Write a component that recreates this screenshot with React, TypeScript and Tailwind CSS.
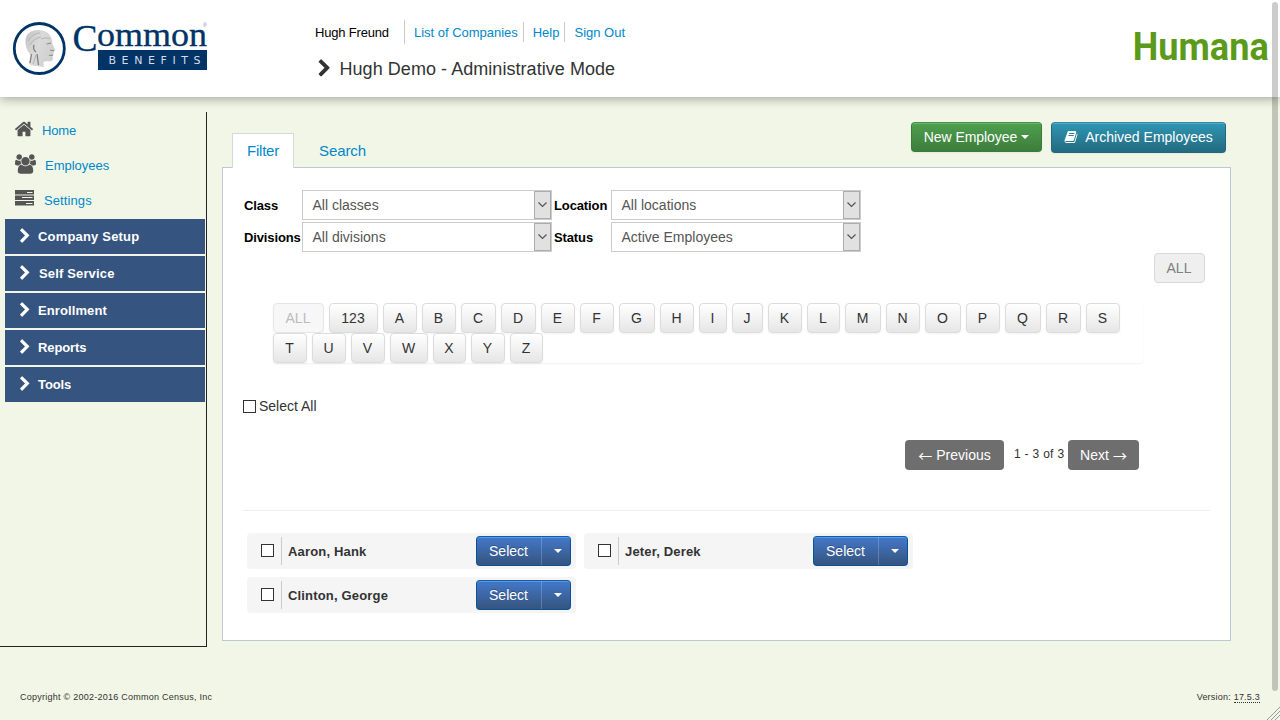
import type { ReactNode } from "react";

type IconProps = { d: string; box?: string; className: string };

function Glyph({ d, box = "0 0 1792 1792", className }: IconProps) {
  return (
    <svg viewBox={box} className={className} fill="currentColor" aria-hidden="true">
      <path d={d} />
    </svg>
  );
}

const CHEVRON =
  "M1363 877l-742 742q-19 19-45 19t-45-19l-166-166q-19-19-19-45t19-45l531-531-531-531q-19-19-19-45t19-45l166-166q19-19 45-19t45 19l742 742q19 19 19 45t-19 45z";
const HOME =
  "M1472 992v480q0 26-19 45t-45 19h-384v-384h-256v384h-384q-26 0-45-19t-19-45v-480q0-1 .5-3t.5-3l575-474 575 474q1 2 1 6zm223-69l-62 74q-8 9-21 11h-3q-13 0-21-7l-692-577-692 577q-12 8-24 7-13-2-21-11l-62-74q-8-10-7-23.5t11-21.5l719-599q32-26 76-26t76 26l244 204v-195q0-14 9-23t23-9h192q14 0 23 9t9 23v408l219 182q10 8 11 21.5t-7 23.5z";
const USERS =
  "M657 896q-162 5-265 128h-134q-82 0-138-40.5t-56-118.5q0-353 124-353 6 0 43.5 21t97.5 42.5 119 21.5q67 0 133-23-5 37-5 66 0 139 81 256zm1071 637q0 120-73 189.5t-194 69.5h-874q-121 0-194-69.5t-73-189.5q0-53 3.5-103.5t14-109 26.5-108.5 43-97.5 62-81 85.5-53.5 111.5-20q10 0 43 21.5t73 48 107 48 135 21.5 135-21.5 107-48 73-48 43-21.5q61 0 111.5 20t85.5 53.5 62 81 43 97.5 26.5 108.5 14 109 3.5 103.5zm-1024-1277q0 106-75 181t-181 75-181-75-75-181 75-181 181-75 181 75 75 181zm704 384q0 159-112.5 271.5t-271.5 112.5-271.5-112.5-112.5-271.5 112.5-271.5 271.5-112.5 271.5 112.5 112.5 271.5zm576 225q0 78-56 118.5t-138 40.5h-134q-103-123-265-128 81-117 81-256 0-29-5-66 66 23 133 23 59 0 119-21.5t97.5-42.5 43.5-21q124 0 124 353zm-128-609q0 106-75 181t-181 75-181-75-75-181 75-181 181-75 181 75 75 181z";
const BOOK =
  "M1703 478q40 57 18 129l-275 906q-19 64-76.5 107.5t-122.5 43.5h-923q-77 0-148.5-53.5t-99.5-131.5q-24-67-2-127 0-4 3-27t4-37q1-8-3-21.5t-3-19.5q2-11 8-21t16.5-23.5 16.5-23.5q23-38 45-91.5t30-91.5q3-10 .5-30t-.5-28q3-11 17-28t17-23q21-36 42-92t25-90q1-9-2.5-32t.5-28q4-13 22-30.5t22-22.5q19-26 42.5-84.5t27.5-96.5q1-8-3-25.5t-2-26.5q2-8 9-18t18-23 17-21q8-12 16.5-30.5t15-35 16-36 19.5-32 26.5-23.5 36-11.5 47.5 5.5l-1 3q38-9 51-9h761q74 0 114 56t18 130l-274 906q-36 119-71.5 153.5t-128.5 34.5h-869q-27 0-38 15-11 16-1 43 24 70 144 70h923q29 0 56-15.5t35-41.5l300-987q7-22 5-57 38 15 59 43zm-1064 2q-4 13 2 22.5t20 9.5h608q13 0 25.5-9.5t16.5-22.5l21-64q4-13-2-22.5t-20-9.5h-608q-13 0-25.5 9.5t-16.5 22.5zm-83 256q-4 13 2 22.5t20 9.5h608q13 0 25.5-9.5t16.5-22.5l21-64q4-13-2-22.5t-20-9.5h-608q-13 0-25.5 9.5t-16.5 22.5z";

function CommonLogo() {
  return (
    <svg width="210" height="80" viewBox="0 0 210 80" className="block shrink-0">
      <defs>
        <linearGradient id="face" x1="0" y1="0" x2="1" y2="0.5">
          <stop offset="0" stopColor="#c2c2c2" />
          <stop offset="0.5" stopColor="#dadada" />
          <stop offset="1" stopColor="#cfcfcf" />
        </linearGradient>
      </defs>
      <circle cx="39.3" cy="48.5" r="25" fill="#fff" stroke="#003366" strokeWidth="2.800" />
      <path
        d="M25.500 43C24.500 35 30 30 38 30c8 0 13 4 14 10l.4 4 3 6.500-2 1.300.2 3-1 1.200.3 3.500c-.5 1.800-3 2-5.500 1.500l-4 1 .4 5-11.800-1.500-3.300-1.500 2-9C28.500 52 26 49 25.500 43z"
        fill="url(#face)"
      />
      <path d="M34 45c-1 3 0 5.500 2 7M31.500 54l-1.500 9M37 54l1.500 11" stroke="#808080" strokeWidth="1.300" fill="none" />
      <path d="M46.500 44l4.500-.8M49 55.500l4-.4M50 50l4 .8" stroke="#909090" strokeWidth="1.200" fill="none" />
      <path d="M28 41c3-5 7-8 12-8M30 45c2-4 6-7 11-8M41 39c4-1.500 6-1.500 9 0M33 64l3-9" stroke="#b0b0b0" strokeWidth="0.900" fill="none" />
      <text x="72.500" y="50.800" textLength="25" lengthAdjust="spacingAndGlyphs" fill="#003366" stroke="#003366" strokeWidth="0.300" fontSize="37" fontFamily="Liberation Serif, serif">C</text>
      <text x="97" y="45.600" textLength="110" lengthAdjust="spacingAndGlyphs" fill="#003366" stroke="#003366" strokeWidth="0.300" fontSize="33" fontFamily="Liberation Serif, serif">ommon</text>
      <text x="203" y="26.500" fill="#6f8bac" fontSize="5" fontFamily="Liberation Sans, sans-serif">®</text>
      <rect x="98" y="50" width="109" height="20" fill="#003366" />
      <text x="108.500" y="63.700" textLength="92" fill="#d5deea" fontSize="11" fontFamily="DejaVu Sans, sans-serif">BENEFITS</text>
    </svg>
  );
}

function HumanaLogo() {
  return (
    <svg width="142" height="56" viewBox="0 0 142 56" className="block shrink-0 overflow-visible">
      <text x="2.800" y="44" textLength="136" lengthAdjust="spacingAndGlyphs" fill="#5c9a1b" fontSize="38.500" fontWeight="700" fontFamily="Roboto, sans-serif">Humana</text>
    </svg>
  );
}

function Caret() {
  return <span className="block h-0 w-0 border-x-4 border-t-4 border-x-transparent border-t-white" />;
}

function SideLink({ icon, label, className }: { icon: ReactNode; label: string; className: string }) {
  return (
    <a className="flex h-[35px] items-center pl-[15px] text-[13px] text-[#0088cc]">
      <span className="flex pb-1">{icon}</span>
      <span className={className}>{label}</span>
    </a>
  );
}

const sections = [
  { label: "Company Setup", className: "tracking-[0.180px]" },
  { label: "Self Service", className: "pl-px tracking-[0.150px]" },
  { label: "Enrollment", className: "tracking-[0.100px]" },
  { label: "Reports", className: "tracking-[-0.100px]" },
  { label: "Tools", className: "tracking-[-0.100px]" },
];

function Sidebar() {
  return (
    <nav className="mt-[15px] h-[535px] w-[207px] border-r border-b border-[#222] pt-px">
      <SideLink icon={<Glyph d={HOME} className="-ml-px h-[20px] w-[20px] text-[#555]" />} label="Home" className="ml-2 tracking-[-0.150px]" />
      <SideLink
        icon={<Glyph d={USERS} box="64 0 1920 1792" className="h-[20px] w-[21px] text-[#555]" />}
        label="Employees"
        className="ml-[9px]"
      />
      <SideLink
        icon={
          <svg width="20" height="18" viewBox="0 0 20 18" className="text-[#555]">
            <path fill="currentColor" d="M0 0h19v4.500H0zM0 5.500h19V10H0zM0 11h19v4.500H0z" />
            <path stroke="#f2f6e6" d="M12 2.500h5.500M7 7.500h10.500M11 13.500h6.500" />
          </svg>
        }
        label="Settings"
        className="ml-[9px] tracking-[0.100px]"
      />
      <ul className="mt-px ml-[5px] flex w-[200px] flex-col gap-[2px]">
        {sections.map((s) => (
          <li key={s.label} className="flex h-[35px] items-center bg-[#35547f] pl-[12px] text-[13px] font-bold text-white">
            <Glyph d={CHEVRON} className="mb-[2px] h-[16px] w-[16px]" />
            <span className="ml-[5px]">
              <span className={s.className}>{s.label}</span>
            </span>
          </li>
        ))}
      </ul>
    </nav>
  );
}

function Select({ value }: { value: string }) {
  return (
    <div className="flex h-[30px] w-[250px] border border-[#ccc] bg-white text-sm text-[#555]">
      <span className="flex-1 pl-[9.500px] leading-7">{value}</span>
      <span className="flex w-[17px] items-center justify-center border border-[#acacac] bg-[#e1e1e1]">
        <svg width="9" height="6" viewBox="0 0 9 6" fill="none" stroke="#555" strokeWidth="1.200">
          <path d="M.5.5l4 4 4-4" />
        </svg>
      </span>
    </div>
  );
}

function FieldLabel({ children }: { children: string }) {
  return <span className="pt-[2px] text-[13px] tracking-[-0.120px]">{children}</span>;
}

const letters: [string, string][] = [
  ["123", "w-[49px]"], ["A", "w-[34px]"], ["B", "w-[34px]"], ["C", "w-[35px]"], ["D", "w-[35px]"],
  ["E", "w-[34px]"], ["F", "w-[34px]"], ["G", "w-[36px]"], ["H", "w-[34px]"], ["I", "w-[28px]"],
  ["J", "w-[31px]"], ["K", "w-[34px]"], ["L", "w-[33px]"], ["M", "w-[36px]"], ["N", "w-[34px]"],
  ["O", "w-[36px]"], ["P", "w-[34px]"], ["Q", "w-[36px]"], ["R", "w-[35px]"], ["S", "w-[34px]"],
  ["T", "w-[34px]"], ["U", "w-[34px]"], ["V", "w-[34px]"], ["W", "w-[38px]"], ["X", "w-[33px]"],
  ["Y", "w-[34px]"], ["Z", "w-[33px]"],
];

function LetterButton({ label, width }: { label: string; width: string }) {
  return (
    <button
      className={`${width} h-[30px] rounded-[4px] border border-[#dcdcdc] bg-linear-to-b from-white to-[#e6e6e6] pr-px text-center text-sm text-[#333] shadow-[0_1px_2px_rgba(0,0,0,0.05)]`}
    >
      {label}
    </button>
  );
}

function Checkbox() {
  return <span className="block h-[13px] w-[13px] border border-[#333] bg-white" />;
}

function EmployeeCard({ name }: { name: string }) {
  return (
    <div className="flex h-9 w-[329px] items-center rounded-[4px] bg-[#f5f5f5] pl-[14px]">
      <span className="mb-px">
        <Checkbox />
      </span>
      <span className="ml-[7px] h-7 w-px bg-[#ccc]" />
      <span className="ml-[6px] flex-1 pt-px text-[13px] font-bold tracking-[0.170px] text-[#333]">{name}</span>
      <div className="mr-[5px] flex h-[30px] w-[95px] rounded-[4px] border border-[#0a5296] border-t-[#0060b4] bg-linear-to-b from-[#4379cb] to-[#35547f] text-sm text-white shadow-[inset_0_1px_0_rgba(255,255,255,0.2)]">
        <span className="w-[65px] border-r border-white/20 pr-px text-center leading-7 [text-shadow:0_-1px_0_rgba(0,0,0,0.25)]">Select</span>
        <span className="flex flex-1 items-center justify-center pl-1">
          <Caret />
        </span>
      </div>
    </div>
  );
}

function Arrow({ children }: { children: string }) {
  return (
    <span className="inline-block leading-none" style={{ fontFamily: '"Noto Sans CJK SC", sans-serif' }}>
      {children}
    </span>
  );
}

function Header() {
  return (
    <header className="relative z-10 flex h-[97px] w-full bg-white shadow-[0_2px_10px_rgba(0,0,0,0.33)]">
      <CommonLogo />
      <div className="ml-[105px] w-[400px]">
        <div className="mt-5 flex h-6 items-center text-[13px] text-[#0088cc]">
          <span className="w-[89px] pt-px tracking-[-0.180px] text-black">Hugh Freund</span>
          <span className="h-6 border-l border-[#ccc] pl-[9px] leading-[26px] tracking-[-0.020px]">List of Companies</span>
          <span className="ml-[5px] h-5 border-l border-[#ccc] pl-[9px] leading-[22px]">Help</span>
          <span className="ml-[5px] h-5 border-l border-[#ccc] pl-[9px] leading-[22px]">Sign Out</span>
        </div>
        <h1 className="mt-[13px] flex items-center text-lg leading-6 text-[#333]">
          <Glyph d={CHEVRON} className="mb-[2px] h-[19px] w-[19px]" />
          <span className="ml-[5.500px] tracking-[0.050px]">Hugh Demo - Administrative Mode</span>
        </h1>
      </div>
      <div className="mt-4 mr-[8px] ml-auto">
        <HumanaLogo />
      </div>
    </header>
  );
}

export default function App() {
  return (
    <div
      className="relative flex h-[720px] w-[1280px] flex-col overflow-hidden bg-[#f2f6e6]"
      style={{ fontFamily: '"Liberation Sans", Arial, sans-serif' }}
    >
      <Header />
      <div className="flex">
        <Sidebar />
        <main className="ml-[15px] w-[1009px] pt-[25px]">
          <div className="flex h-[46px] items-start justify-between">
            <div className="mt-[11px] ml-[10px] flex text-[15px] leading-[34px] text-[#0088cc]">
              <span className="relative z-10 h-[35px] w-[62px] border border-b-0 border-[#d3d9dc] bg-white text-center tracking-[-0.200px]">Filter</span>
              <span className="ml-[25px] pt-px tracking-[-0.100px]">Search</span>
            </div>
            <div className="mr-[5px] flex gap-[9px] text-sm text-white [text-shadow:0_-1px_0_rgba(0,0,0,0.25)]">
              <button className="flex h-[30px] w-[131px] items-center justify-center gap-[4px] rounded-[4px] border border-[#3b7a3b] border-t-[#46914a] bg-linear-to-b from-[#4ea04e] to-[#3d7d3c] shadow-[inset_0_1px_0_rgba(255,255,255,0.2),0_1px_2px_rgba(0,0,0,0.05)]">
                <span className="tracking-[-0.050px]">New Employee</span>
                <Caret />
              </button>
              <button className="flex h-[31px] w-[175px] items-center justify-center gap-[7px] rounded-[4px] border border-[#21677f] border-t-[#298aae] bg-linear-to-b from-[#2f96b4] to-[#236a80] pb-px shadow-[inset_0_1px_0_rgba(255,255,255,0.2),0_1px_2px_rgba(0,0,0,0.05)]">
                <Glyph d={BOOK} className="h-[14px] w-[14px]" />
                Archived Employees
              </button>
            </div>
          </div>
          <section className="-mt-px h-[474px] border border-[#bac8d8] bg-white pt-[22px]">
            <div className="ml-[21px] grid w-[619px] grid-cols-[58px_252px_57px_250px] items-center gap-y-[2px] font-bold text-black">
              <FieldLabel>Class</FieldLabel>
              <div className="font-normal"><Select value="All classes" /></div>
              <FieldLabel>Location</FieldLabel>
              <div className="font-normal"><Select value="All locations" /></div>
              <FieldLabel>Divisions</FieldLabel>
              <div className="font-normal"><Select value="All divisions" /></div>
              <FieldLabel>Status</FieldLabel>
              <div className="font-normal"><Select value="Active Employees" /></div>
            </div>
            <div className="mt-px flex justify-end pr-[25px]">
              <button className="h-[30px] w-[51px] rounded-[4px] border border-[#d8d8d8] bg-[#efefef] pr-px text-sm text-[#808080]">ALL</button>
            </div>
            <div className="mt-5 ml-[50px] flex h-[60px] w-[870px] flex-wrap content-start gap-x-[5px] rounded-[4px] pr-[20px] shadow-[0_1px_2px_rgba(0,0,0,0.06)]">
              <button className="h-[30px] w-[51px] rounded-[4px] border border-[#e6e6e6] bg-[#f7f7f7] pr-px text-sm text-[#bcbcbc]">ALL</button>
              {letters.map(([label, width]) => (
                <LetterButton key={label} label={label} width={width} />
              ))}
            </div>
            <label className="mt-[33px] ml-5 flex h-5 items-center gap-[3px] text-sm text-[#333]">
              <Checkbox />
              Select All
            </label>
            <div className="mt-6 flex h-[30px] justify-end pr-[91px] text-sm text-white">
              <button className="flex w-[99px] items-center justify-center gap-[4px] rounded-[4px] bg-[#6e6e6e]">
                <Arrow>←</Arrow>
                Previous
              </button>
              <span className="w-[64px] pl-[10px] text-xs leading-[28px] tracking-[0.300px] text-[#333]">1 - 3 of 3</span>
              <button className="flex w-[71px] items-center justify-center gap-[4px] rounded-[4px] bg-[#6e6e6e]">
                Next
                <Arrow>→</Arrow>
              </button>
            </div>
            <hr className="mt-10 mr-5 ml-5 border-[#eee]" />
            <div className="mt-[22px] ml-6 grid w-[666px] grid-cols-2 gap-x-2 gap-y-2">
              <EmployeeCard name="Aaron, Hank" />
              <EmployeeCard name="Jeter, Derek" />
              <EmployeeCard name="Clinton, George" />
            </div>
          </section>
        </main>
      </div>
      <footer className="flex justify-between px-5 pt-[44px] text-[9px] leading-3 text-[#333]">
        <span className="tracking-[0.250px]">Copyright © 2002-2016 Common Census, Inc</span>
        <span className="tracking-[0.220px]">
          Version: <span className="border-b border-dotted border-[#333]">17.5.3</span>
        </span>
      </footer>
      <div className="absolute top-[2px] right-[2px] z-20 h-[689px] w-[6px] rounded-full bg-black/20" />
      <svg className="absolute right-0 bottom-0" width="14" height="14" viewBox="0 0 14 14" stroke="#999" fill="none">
        <path d="M1 14L14 1M5 14l9-9M9 14l5-5" />
      </svg>
    </div>
  );
}
